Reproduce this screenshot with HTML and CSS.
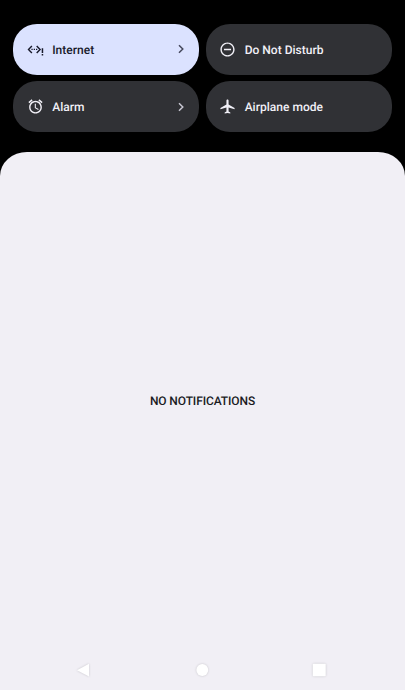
FILE: index.html
```html
<!DOCTYPE html>
<html lang="en">
<head>
<meta charset="utf-8">
<title>Quick settings</title>
<link rel="stylesheet" href="styles.css">
</head>
<body>
<main class="screen">
  <section class="tiles">
    <div class="tile tile-on">
      <svg class="icon" viewBox="0 0 17 17"><path d="M4.9 4.9 1.5 8.4l3.4 3.5M9.7 4.9l3.4 3.5-3.4 3.5" fill="none" stroke="currentColor" stroke-width="1.4"/><path d="M4.4 7.8h1.3v1.3H4.4zM6.7 7.8H8v1.3H6.7zM9 7.8h1.3v1.3H9zM14.7 7.2h1.5v4.8h-1.5zM14.7 13h1.5v1.5h-1.5z"/></svg>
      <span class="label">Internet</span>
      <svg class="chevron" viewBox="0 0 8 10"><path d="M2 1.2 5.8 5 2 8.8"/></svg>
    </div>
    <div class="tile">
      <svg class="icon" viewBox="0 0 24 24"><path d="M7 11v2h10v-2H7zm5-9C6.48 2 2 6.48 2 12s4.48 10 10 10 10-4.48 10-10S17.52 2 12 2zm0 18c-4.41 0-8-3.59-8-8s3.59-8 8-8 8 3.59 8 8-3.59 8-8 8z"/></svg>
      <span class="label">Do Not Disturb</span>
    </div>
    <div class="tile">
      <svg class="icon" viewBox="0 0 24 24"><path d="M22 5.72l-4.6-3.86-1.29 1.53 4.6 3.86L22 5.72zM7.88 3.39L6.6 1.86 2 5.71l1.29 1.53 4.59-3.85zM12.5 8H11v6l4.75 2.85.75-1.23-4-2.37V8zM12 4c-4.97 0-9 4.03-9 9s4.02 9 9 9c4.97 0 9-4.03 9-9s-4.03-9-9-9zm0 16c-3.87 0-7-3.13-7-7s3.13-7 7-7 7 3.13 7 7-3.13 7-7 7z"/></svg>
      <span class="label">Alarm</span>
      <svg class="chevron" viewBox="0 0 8 10"><path d="M2 1.2 5.8 5 2 8.8"/></svg>
    </div>
    <div class="tile">
      <svg class="icon" viewBox="0 0 24 24"><path d="M22 16v-2l-8.5-5V3.5c0-.83-.67-1.5-1.5-1.5s-1.5.67-1.5 1.5V9L2 14v2l8.5-2.5V19L8 20.5V22l4-1 4 1v-1.5L13.5 19v-5.5L22 16z"/></svg>
      <span class="label">Airplane mode</span>
    </div>
  </section>
  <section class="shade">
    <p class="empty">NO NOTIFICATIONS</p>
    <nav class="navbar">
      <svg class="nav-icon" viewBox="0 0 18 18"><path d="M15 2.8v12.6L3 9.2z"/></svg>
      <svg class="nav-icon" viewBox="0 0 18 18"><circle cx="9" cy="9" r="5.9"/></svg>
      <svg class="nav-icon" viewBox="0 0 18 18"><rect x="2.8" y="2.8" width="12.9" height="12.4" rx=".8"/></svg>
    </nav>
  </section>
</main>
</body>
</html>
```
FILE: styles.css
```css
* { box-sizing: border-box; }

body {
  margin: 0;
  background: #000;
  font-family: Roboto, "Liberation Sans", sans-serif;
  text-rendering: geometricPrecision;
}

.screen {
  display: flex;
  flex-direction: column;
  height: 690px;
  overflow: hidden;
}

.tiles {
  display: grid;
  grid-template-columns: 1fr 1fr;
  grid-auto-rows: 50.6px;
  gap: 6.7px;
  padding: 24px 13.4px 20.1px;
}

.tile {
  display: flex;
  align-items: center;
  padding: 0 14px 0 13.4px;
  border-radius: 24px;
  background: #303135;
  color: #f1f0f7;
}

.tile-on {
  background: #dbe2ff;
  color: #191b2c;
}

.icon {
  width: 17px;
  height: 17px;
  margin-right: 8.4px;
  fill: currentColor;
}

.label {
  flex: 1;
  padding-top: 1px;
  font-size: 12px;
  font-weight: 500;
  line-height: 16px;
  letter-spacing: 0.02px;
  white-space: nowrap;
}

.chevron {
  width: 8px;
  height: 10px;
  fill: none;
  stroke: #c8c7d2;
  stroke-width: 1.5;
}

.tile-on .chevron { stroke: #45485c; }

.shade {
  display: flex;
  flex: 1;
  flex-direction: column;
  border-radius: 27px 27px 0 0 / 24px 24px 0 0;
  background: #f1eff5;
}

.empty {
  flex: 1;
  margin: 0;
  padding-top: 241px;
  color: #1b1b1f;
  font-size: 12px;
  font-weight: 500;
  line-height: 16px;
  letter-spacing: -0.1px;
  text-align: center;
}

.navbar {
  display: grid;
  grid-template-columns: 18px 18px 18px;
  justify-content: space-between;
  padding: 0 76.6px 11px 74.4px;
}

.nav-icon {
  width: 18px;
  height: 18px;
  overflow: visible;
  fill: #fff;
  filter: drop-shadow(0 0.8px 0.8px rgba(0, 0, 0, 0.18));
}

.nav-icon:nth-child(2) { transform: translateX(1.3px); }
```
